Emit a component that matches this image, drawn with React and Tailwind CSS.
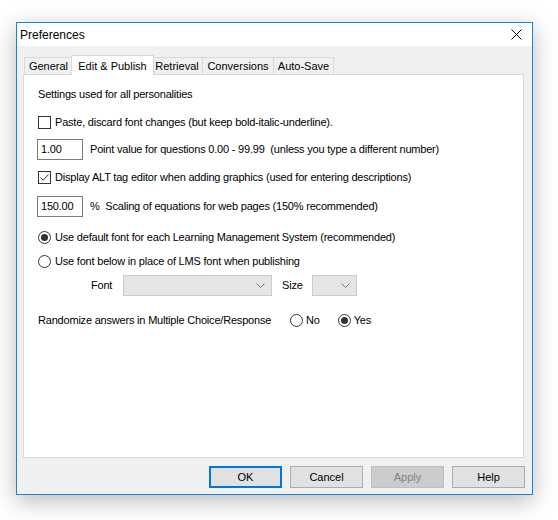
import React from "react";

const UI = { fontFamily: '"Liberation Sans", Arial, sans-serif' };

function CheckBox({ checked }) {
  return (
    <span className="w-[13px] h-[13px] border border-[#333333] bg-white flex items-center justify-center shrink-0">
      {checked && (
        <svg width="11" height="11" viewBox="0 0 11 11">
          <path d="M1.5 5.5 L4.2 8.2 L9.5 2.5" fill="none" stroke="#333333" strokeWidth="1" />
        </svg>
      )}
    </span>
  );
}

function Radio({ checked }) {
  return (
    <span className="w-[13px] h-[13px] rounded-full border border-[#333333] bg-white flex items-center justify-center shrink-0">
      {checked && <span className="w-[7px] h-[7px] rounded-full bg-[#333333]" />}
    </span>
  );
}

function Combo({ width }) {
  return (
    <div className={`${width} h-[21px] border border-[#cccccc] bg-[#e5e5e5] flex items-center justify-end pr-[6px]`}>
      <svg width="9" height="5" viewBox="0 0 9 5">
        <path d="M0.5 0.5 L4.5 4.5 L8.5 0.5" fill="none" stroke="#7a7a7a" strokeWidth="1" />
      </svg>
    </div>
  );
}

function Tab({ label, active, width }) {
  if (active) {
    return (
      <div
        className={`${width} h-[20px] -mx-[2px] relative z-10 bg-white border border-[#d9d9d9] border-b-0 flex items-start justify-center pt-[2px] text-[11px] text-black`}
      >
        {label}
      </div>
    );
  }
  return (
    <div
      className={`${width} h-[18px] mt-[2px] bg-[#f0f0f0] border border-[#d9d9d9] border-b-0 -ml-px first:ml-0 flex items-center justify-center text-[11px] text-black`}
    >
      {label}
    </div>
  );
}

function Button({ label, variant }) {
  const base = "w-[73px] h-[22px] flex items-center justify-center text-[11px]";
  if (variant === "default")
    return <div className={`${base} bg-[#e1e1e1] border-2 border-[#0078d7] text-black`}>{label}</div>;
  if (variant === "disabled")
    return <div className={`${base} bg-[#cccccc] border border-[#bfbfbf] text-[#838383]`}>{label}</div>;
  return <div className={`${base} bg-[#e1e1e1] border border-[#adadad] text-black`}>{label}</div>;
}

export default function App() {
  return (
    <div className="w-[558px] h-[520px] bg-white pt-[22px] pl-[16px]" style={UI}>
      <div className="w-[517px] h-[473px] border border-[#1883d7] bg-[#f0f0f0] flex flex-col shadow-[0_6px_22px_rgba(0,0,0,0.28)]">
        {/* title bar */}
        <div className="h-[23px] bg-white flex items-center justify-between pl-[3px] pr-[10px]">
          <span className="text-[12px] text-black">Preferences</span>
          <svg width="11" height="11" viewBox="0 0 11 11">
            <path d="M0.5 0.5 L10.5 10.5 M10.5 0.5 L0.5 10.5" stroke="#000" strokeWidth="1" />
          </svg>
        </div>

        {/* tabs */}
        <div className="flex pl-[7px] mt-[9px]">
          <Tab label="General" width="w-[49px]" />
          <Tab label="Edit & Publish" width="w-[83px]" active />
          <Tab label="Retrieval" width="w-[52px]" />
          <Tab label="Conversions" width="w-[72px]" />
          <Tab label="Auto-Save" width="w-[61px]" />
        </div>

        {/* page */}
        <div className="ml-[6px] w-[501px] h-[384px] bg-white border border-[#d9d9d9] -mt-px flex flex-col pl-[14px] pt-[11px] text-[11px] tracking-[-0.2px] text-black">
          <div className="h-[16px] flex items-center">Settings used for all personalities</div>

          <div className="h-[16px] mt-[12px] flex items-center gap-[4px]">
            <CheckBox />
            <span>Paste, discard font changes (but keep bold-italic-underline).</span>
          </div>

          <div className="h-[21px] mt-[9px] flex items-center">
            <div className="w-[46px] h-[21px] border border-[#7a7a7a] flex items-center pl-[3px] -ml-px">1.00</div>
            <span className="ml-[7px] whitespace-pre">Point value for questions 0.00 - 99.99  (unless you type a different number)</span>
          </div>

          <div className="h-[16px] mt-[9px] flex items-center gap-[4px]">
            <CheckBox checked />
            <span>Display ALT tag editor when adding graphics (used for entering descriptions)</span>
          </div>

          <div className="h-[21px] mt-[11px] flex items-center">
            <div className="w-[46px] h-[21px] border border-[#7a7a7a] flex items-center pl-[3px] -ml-px">150.00</div>
            <span className="ml-[7px] whitespace-pre">%  Scaling of equations for web pages (150% recommended)</span>
          </div>

          <div className="h-[16px] mt-[12px] flex items-center gap-[4px]">
            <Radio checked />
            <span>Use default font for each Learning Management System (recommended)</span>
          </div>

          <div className="h-[16px] mt-[8px] flex items-center gap-[4px]">
            <Radio />
            <span>Use font below in place of LMS font when publishing</span>
          </div>

          <div className="h-[21px] mt-[6px] flex items-center">
            <span className="ml-[53px] w-[32px]">Font</span>
            <Combo width="w-[149px]" />
            <span className="ml-[10px] w-[30px]">Size</span>
            <Combo width="w-[45px]" />
          </div>

          <div className="h-[16px] mt-[16px] flex items-center">
            <span className="w-[252px]">Randomize answers in Multiple Choice/Response</span>
            <div className="flex items-center gap-[3px]">
              <Radio />
              <span>No</span>
            </div>
            <div className="flex items-center gap-[3px] ml-[18px]">
              <Radio checked />
              <span>Yes</span>
            </div>
          </div>
        </div>

        {/* dialog buttons */}
        <div className="flex justify-end gap-[8px] mt-[8px] pr-[7px]">
          <Button label="OK" variant="default" />
          <Button label="Cancel" />
          <Button label="Apply" variant="disabled" />
          <Button label="Help" />
        </div>
      </div>
    </div>
  );
}
